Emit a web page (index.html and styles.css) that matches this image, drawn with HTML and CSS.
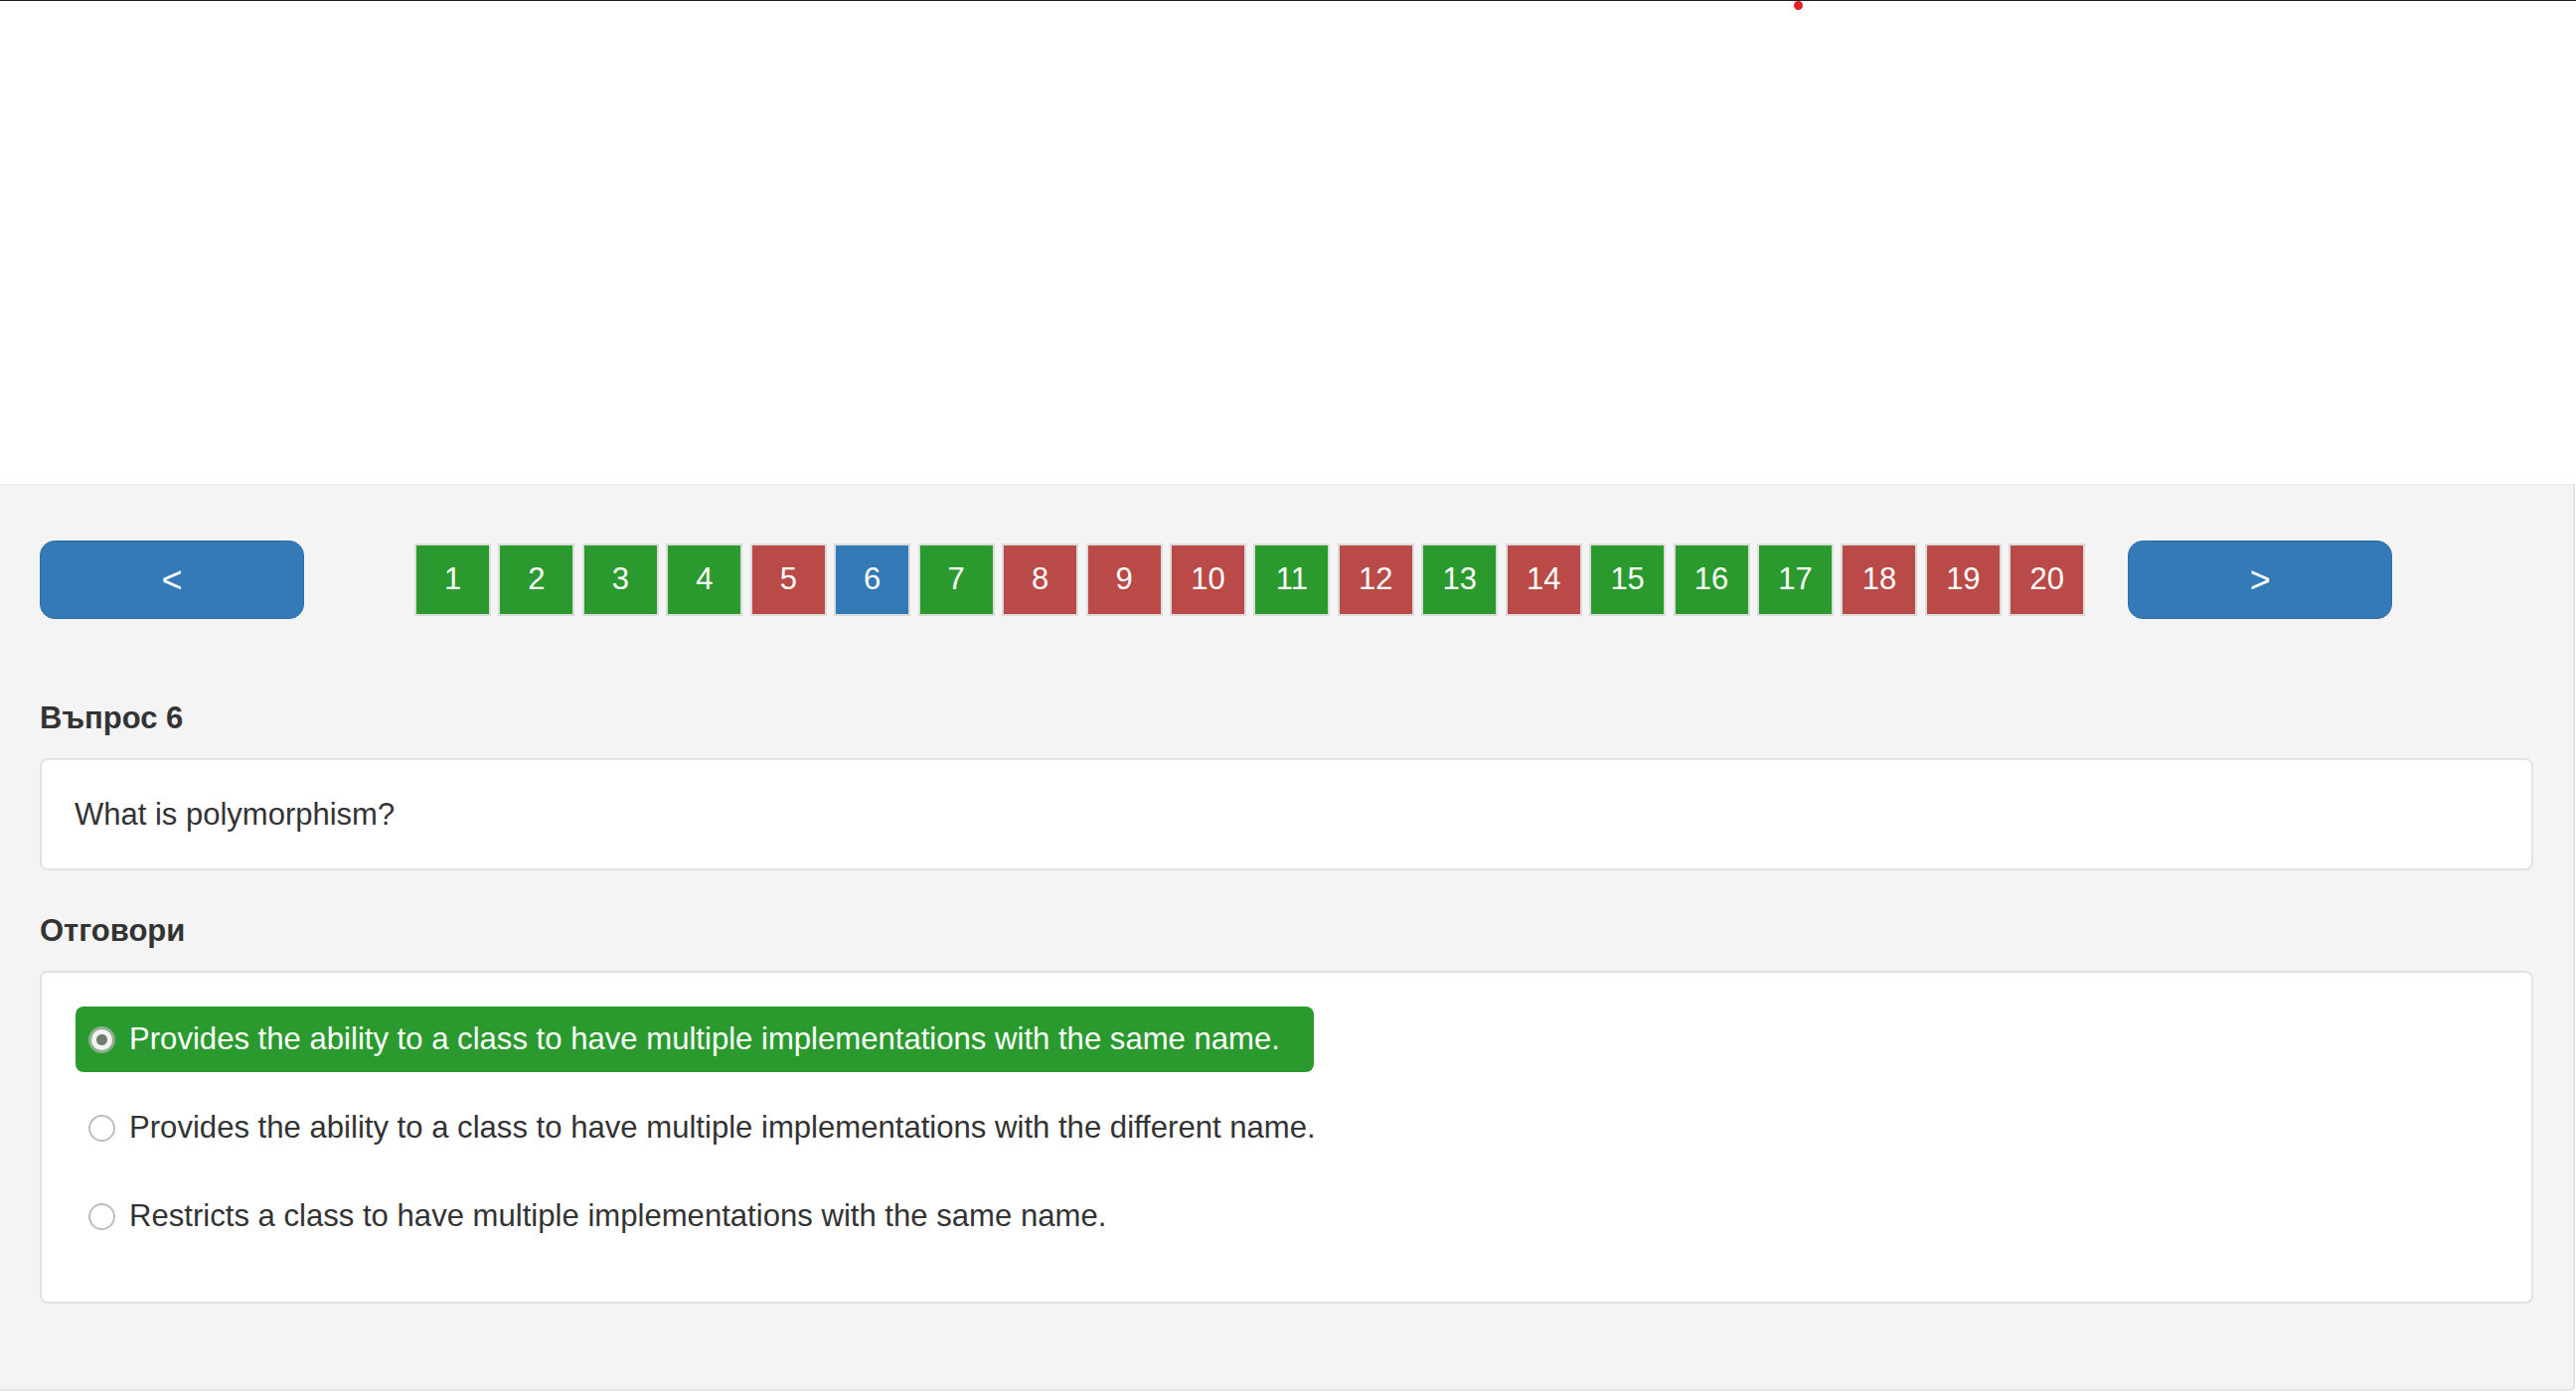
FILE: index.html
```html
<!DOCTYPE html>
<html lang="bg">
<head>
<meta charset="utf-8">
<title>Тест</title>
<link rel="stylesheet" href="styles.css">
</head>
<body>
<div class="topbar"></div>
<span class="cursor-dot"></span>
<div class="blank"></div>
<main class="panel">
  <nav class="pager">
    <button class="nav-btn prev">&lt;</button>
    <div class="numbers">
      <span class="num ok">1</span>
      <span class="num ok">2</span>
      <span class="num ok">3</span>
      <span class="num ok">4</span>
      <span class="num bad">5</span>
      <span class="num cur">6</span>
      <span class="num ok">7</span>
      <span class="num bad">8</span>
      <span class="num bad">9</span>
      <span class="num bad">10</span>
      <span class="num ok">11</span>
      <span class="num bad">12</span>
      <span class="num ok">13</span>
      <span class="num bad">14</span>
      <span class="num ok">15</span>
      <span class="num ok">16</span>
      <span class="num ok">17</span>
      <span class="num bad">18</span>
      <span class="num bad">19</span>
      <span class="num bad">20</span>
    </div>
    <button class="nav-btn next">&gt;</button>
  </nav>

  <h4 class="label q-label">Въпрос 6</h4>
  <div class="card question">What is polymorphism?</div>

  <h4 class="label a-label">Отговори</h4>
  <div class="card answers">
    <div class="option selected"><span class="radio checked"></span><span>Provides the ability to a class to have multiple implementations with the same name.</span></div>
    <div class="option"><span class="radio"></span><span>Provides the ability to a class to have multiple implementations with the different name.</span></div>
    <div class="option"><span class="radio"></span><span>Restricts a class to have multiple implementations with the same name.</span></div>
  </div>
</main>
</body>
</html>
```

FILE: styles.css
```css
* { box-sizing: border-box; }

html, body {
  margin: 0;
  padding: 0;
  background: #ffffff;
  font-family: "Liberation Sans", Arial, sans-serif;
  color: #333333;
}

.topbar {
  height: 1px;
  background: #1e1e1e;
}

.cursor-dot {
  position: absolute;
  left: 1805px;
  top: 1px;
  width: 9px;
  height: 9px;
  border-radius: 50%;
  background: #e31e24;
}

.blank {
  height: 486px;
}

.panel {
  width: 2591px;
  height: 913px;
  background: #f4f4f4;
  border-top: 1px solid #ececec;
  border-right: 2px solid #e4e4e4;
  border-bottom: 2px solid #e4e4e4;
  border-bottom-right-radius: 5px;
  padding: 56px 40px 0 40px;
}

.pager {
  display: flex;
  align-items: center;
  height: 79px;
}

.nav-btn {
  width: 266px;
  height: 79px;
  border: 1px solid #2e6da4;
  border-radius: 15px;
  background: #337ab7;
  color: #ffffff;
  font-family: "Liberation Sans", Arial, sans-serif;
  font-size: 36px;
  line-height: 1;
  padding: 0;
}

.prev { margin-right: 111px; }
.next { margin-left: 43px; }

.numbers {
  display: flex;
  gap: 7.45px;
}

.num {
  width: 77px;
  height: 73px;
  display: flex;
  align-items: center;
  justify-content: center;
  border: 2px solid #dcdcdc;
  color: #ffffff;
  font-size: 31px;
  padding-bottom: 1px;
}

.num.ok { background: #2b9a2e; }
.num.bad { background: #b94a48; }
.num.cur { background: #337ab7; }

.label {
  margin: 0;
  font-size: 31px;
  font-weight: bold;
  line-height: 36px;
  color: #333333;
}

.q-label { margin-top: 82px; }
.a-label { margin-top: 43px; }

.card {
  width: 2509px;
  background: #ffffff;
  border: 2px solid #e2e2e2;
  border-radius: 8px;
  margin-top: 22px;
}

.question {
  height: 113px;
  padding: 0 33px;
  display: flex;
  align-items: center;
  font-size: 31px;
}

.answers {
  height: 335px;
  padding: 34px 34px 0 34px;
  display: flex;
  flex-direction: column;
  align-items: flex-start;
  gap: 23px;
}

.option {
  height: 66px;
  display: flex;
  align-items: center;
  gap: 14px;
  padding: 0 20px 0 13px;
  font-size: 31.1px;
  color: #333333;
  border-radius: 8px;
}

.option.selected {
  background: #2b9a2e;
  color: #ffffff;
  width: 1246px;
}

.radio {
  width: 27px;
  height: 27px;
  flex: none;
  border-radius: 50%;
  border: 2px solid #bdbdbd;
  background: #ffffff;
}

.radio.checked {
  border: 3px solid #8fae90;
  background: radial-gradient(circle, #6d7c6d 0 5px, #f2f2f2 6px);
}
```
